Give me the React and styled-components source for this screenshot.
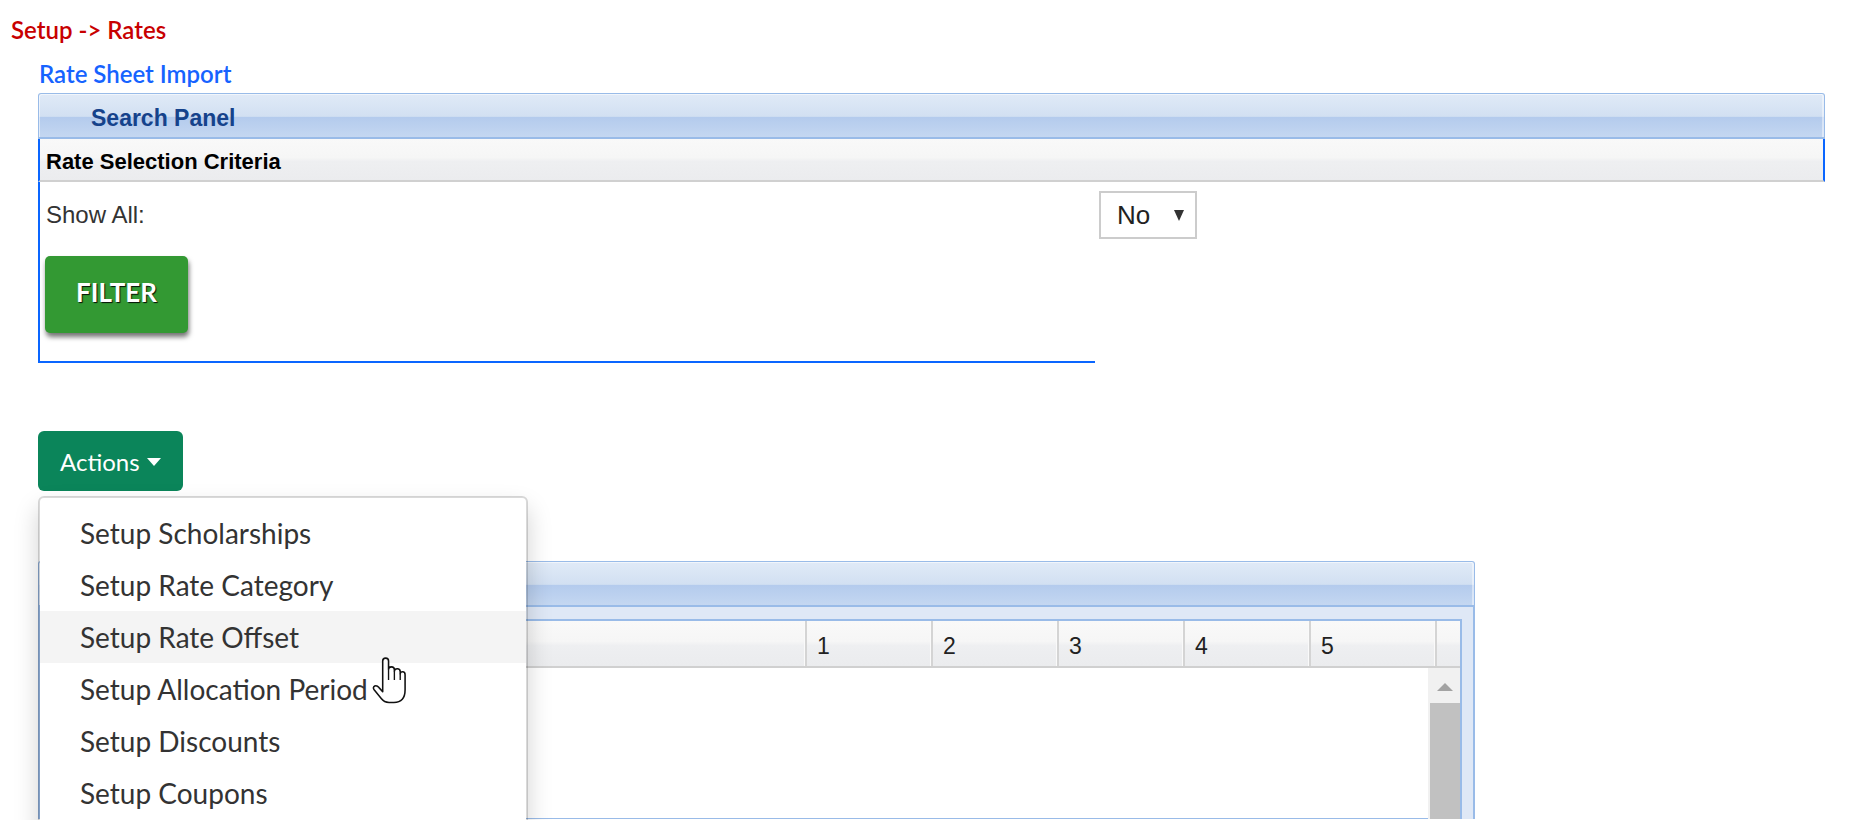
import React from "react";
import styled, { createGlobalStyle } from "styled-components";

const GlobalStyle = createGlobalStyle`
  html, body {
    margin: 0;
    padding: 0;
    background: #fff;
    overflow: hidden;
  }
  body {
    font-family: Lato, "Liberation Sans", sans-serif;
  }
`;

const BLUE_EDGE = "#0a66ff";
const EXT_BORDER = "#99bbe8";
const EXT_HEADER_BG =
  "linear-gradient(to bottom, #e0eaf7 0%, #d2e0f2 52%, #b4cbed 54%, #c4d7f1 100%)";
const EXT_COL_BG =
  "linear-gradient(to bottom, #f9f9f9 0%, #f6f6f6 45%, #eeeff1 55%, #ebecee 100%)";

const Page = styled.div`
  position: relative;
  min-height: 820px;
`;

const Crumb = styled.div`
  padding: 16px 0 0 11px;
  font: 600 24px/27px Lato, "Liberation Sans", sans-serif;
  color: #c80000;
`;

const Content = styled.div`
  padding-left: 38px;
`;

const ImportLink = styled.a`
  display: block;
  margin-top: 16px;
  padding-left: 1px;
  font: 600 24px/29px Lato, "Liberation Sans", sans-serif;
  color: #1663ff;
  text-decoration: none;
  cursor: pointer;
`;

const Panel = styled.div`
  width: ${(p) => p.width}px;
  margin-top: ${(p) => p.top || 0}px;
`;

const PanelHeader = styled.div`
  box-sizing: border-box;
  height: 46px;
  padding: 5px 0 0 52px;
  border: 1px solid ${EXT_BORDER};
  border-bottom-width: 2px;
  border-radius: 3px 3px 0 0;
  background: ${EXT_HEADER_BG};
  box-shadow: inset 1px 1px 0 rgba(255, 255, 255, 0.55),
    inset -2px 0 0 rgba(255, 255, 255, 0.45);
  font: 700 23px/38px "Liberation Sans", Arial, sans-serif;
  color: #15428b;
`;

const CriteriaBar = styled.div`
  box-sizing: border-box;
  height: 43px;
  padding: 5px 0 0 6px;
  border-left: 2px solid ${BLUE_EDGE};
  border-right: 2px solid ${BLUE_EDGE};
  border-bottom: 2px solid #d0d0d0;
  background: ${EXT_COL_BG};
  font: 700 22px/36px "Liberation Sans", Arial, sans-serif;
  color: #000;
`;

const FormRow = styled.div`
  display: flex;
  align-items: flex-start;
`;

const FormCell = styled.div`
  box-sizing: border-box;
  width: 1057px;
  padding: 20px 0 28px 5px;
  border-left: 2px solid ${BLUE_EDGE};
  border-bottom: 2px solid ${BLUE_EDGE};
`;

const FieldLabel = styled.div`
  padding-left: 1px;
  font: 400 24px/25px "Liberation Sans", Arial, sans-serif;
  color: #333;
`;

const FilterButton = styled.button`
  display: block;
  width: 143px;
  height: 77px;
  margin-top: 29px;
  padding: 0 0 5px;
  border: 0;
  border-radius: 5px;
  background: #339933;
  box-shadow: 1px 4px 5px rgba(0, 0, 0, 0.55);
  font: 700 26px Lato, "Liberation Sans", sans-serif;
  color: #fff;
  text-shadow: 1px 1px 1px rgba(0, 0, 0, 0.9);
  cursor: pointer;
`;

const SelectBox = styled.div`
  box-sizing: border-box;
  display: flex;
  align-items: center;
  width: 98px;
  height: 48px;
  margin: 9px 0 0 4px;
  padding: 0 11px 0 16px;
  border: 2px solid #cccccc;
  background: #fff;
  font: 400 26px "Liberation Sans", Arial, sans-serif;
  color: #222;
`;

const DownTriangle = styled.span`
  width: 0;
  height: 0;
  margin-left: auto;
  border-left: ${(p) => p.w / 2}px solid transparent;
  border-right: ${(p) => p.w / 2}px solid transparent;
  border-top: ${(p) => p.h}px solid ${(p) => p.color};
`;

const ActionsWrap = styled.div`
  position: relative;
  margin-top: 68px;
  width: 145px;
`;

const ActionsButton = styled.button`
  box-sizing: border-box;
  display: flex;
  align-items: center;
  gap: 7px;
  width: 145px;
  height: 60px;
  padding: 0 0 0 22px;
  border: 0;
  border-radius: 6px;
  background: #0b855a;
  font: 400 24px Lato, "Liberation Sans", sans-serif;
  color: #fff;
  cursor: pointer;
`;

const Caret = styled.span`
  width: 0;
  height: 0;
  margin-top: 2px;
  border-left: 7.5px solid transparent;
  border-right: 7.5px solid transparent;
  border-top: 8px solid #fff;
`;

const Menu = styled.ul`
  position: absolute;
  top: 65px;
  left: 0;
  z-index: 10;
  box-sizing: border-box;
  width: 490px;
  margin: 0;
  padding: 9px 0;
  list-style: none;
  background: #fff;
  background-clip: padding-box;
  border: 2px solid rgba(0, 0, 0, 0.15);
  border-radius: 6px;
  box-shadow: 0 12px 24px rgba(0, 0, 0, 0.175);
`;

const MenuItem = styled.li`
  padding: 6px 40px;
  font: 400 28px/40px Lato, "Liberation Sans", sans-serif;
  color: #333;
  white-space: nowrap;
  background: ${(p) => (p.active ? "#f4f4f4" : "transparent")};
`;

const GridFrame = styled.div`
  padding: 12px 11px 0 11px;
  border-left: 2px solid ${EXT_BORDER};
  border-right: 2px solid ${EXT_BORDER};
  background: #dfe8f6;
`;

const GridBox = styled.div`
  border: 2px solid ${EXT_BORDER};
  border-bottom: 0;
  background: #fff;
`;

const ColumnRow = styled.div`
  display: flex;
  height: 47px;
  box-sizing: border-box;
  border-bottom: 2px solid #d0d0d0;
  background: ${EXT_COL_BG};
`;

const ColumnCell = styled.div`
  box-sizing: border-box;
  width: ${(p) => p.width}px;
  flex: ${(p) => (p.width ? "none" : "1")};
  padding: 5px 0 0 10px;
  border-right: ${(p) => (p.last ? "0" : "2px solid #d4d4d4")};
  box-shadow: ${(p) => (p.last ? "none" : "inset -1px 0 0 #fafafa")};
  font: 400 23px/40px "Liberation Sans", Arial, sans-serif;
  color: #222;
`;

const GridBody = styled.div`
  display: flex;
  height: 151px;
`;

const RowsArea = styled.div`
  flex: 1;
  border-bottom: 1px solid ${EXT_BORDER};
`;

const ScrollTrack = styled.div`
  display: flex;
  flex-direction: column;
  width: 32px;
  padding-left: 2px;
  box-sizing: border-box;
  background: #f1f1f1;
`;

const ScrollArrow = styled.div`
  display: flex;
  justify-content: center;
  height: 35px;
  padding-top: 15px;
  box-sizing: border-box;
`;

const ScrollThumb = styled.div`
  flex: 1;
  background: #c1c1c1;
`;

const UpTriangle = styled.span`
  width: 0;
  height: 0;
  border-left: 8.5px solid transparent;
  border-right: 8.5px solid transparent;
  border-bottom: 8px solid #a3a3a3;
`;

const Pointer = styled.svg`
  position: absolute;
  left: 372px;
  top: 656px;
  z-index: 20;
  pointer-events: none;
`;

const menuItems = [
  "Setup Scholarships",
  "Setup Rate Category",
  "Setup Rate Offset",
  "Setup Allocation Period",
  "Setup Discounts",
  "Setup Coupons",
];

const dayColumns = ["1", "2", "3", "4", "5"];

const HandCursor = () => (
  <Pointer width="36" height="50" viewBox="-1 -1 37 50">
    <path
      d="M10 3.5 Q10 0.5 13 0.5 Q16 0.5 16 3.5 L16 12 Q16 9.5 19 9.5 Q22 9.5 22 12.5 L22 14 Q22 11.5 25 11.5 Q28 11.5 28 14.5 L28 16.5 Q28 14.5 30.5 14.5 Q33 14.5 33 17.5 L33 33 Q33 46 21.5 46 L16.5 46 Q11.5 46 8.5 42 L1.2 33 Q-0.6 30.4 1.8 29.2 Q4 28.2 6.2 30.8 L10 35 Z"
      fill="#fff"
      stroke="#111"
      strokeWidth="1.6"
      strokeLinejoin="round"
    />
    <path
      d="M16 12 L16 23 M22 14 L22 23 M28 16.5 L28 23"
      stroke="#111"
      strokeWidth="1.4"
      fill="none"
    />
  </Pointer>
);

const App = () => {
  return (
    <Page>
      <GlobalStyle />
      <Crumb>Setup -&gt; Rates</Crumb>
      <Content>
        <ImportLink>Rate Sheet Import</ImportLink>

        <Panel width={1787} top={5}>
          <PanelHeader>Search Panel</PanelHeader>
          <CriteriaBar>Rate Selection Criteria</CriteriaBar>
          <FormRow>
            <FormCell>
              <FieldLabel>Show All:</FieldLabel>
              <FilterButton>FILTER</FilterButton>
            </FormCell>
            <SelectBox>
              No
              <DownTriangle w={11} h={11} color="#333" />
            </SelectBox>
          </FormRow>
        </Panel>

        <ActionsWrap>
          <ActionsButton>
            Actions
            <Caret />
          </ActionsButton>
          <Menu>
            {menuItems.map((item) => (
              <MenuItem key={item} active={item === "Setup Rate Offset"}>
                {item}
              </MenuItem>
            ))}
          </Menu>
        </ActionsWrap>

        <Panel width={1437} top={70}>
          <PanelHeader />
          <GridFrame>
            <GridBox>
              <ColumnRow>
                <ColumnCell width={754} />
                {dayColumns.map((d) => (
                  <ColumnCell key={d} width={126}>
                    {d}
                  </ColumnCell>
                ))}
                <ColumnCell last />
              </ColumnRow>
              <GridBody>
                <RowsArea />
                <ScrollTrack>
                  <ScrollArrow>
                    <UpTriangle />
                  </ScrollArrow>
                  <ScrollThumb />
                </ScrollTrack>
              </GridBody>
            </GridBox>
          </GridFrame>
        </Panel>
      </Content>
      <HandCursor />
    </Page>
  );
};

export default App;
